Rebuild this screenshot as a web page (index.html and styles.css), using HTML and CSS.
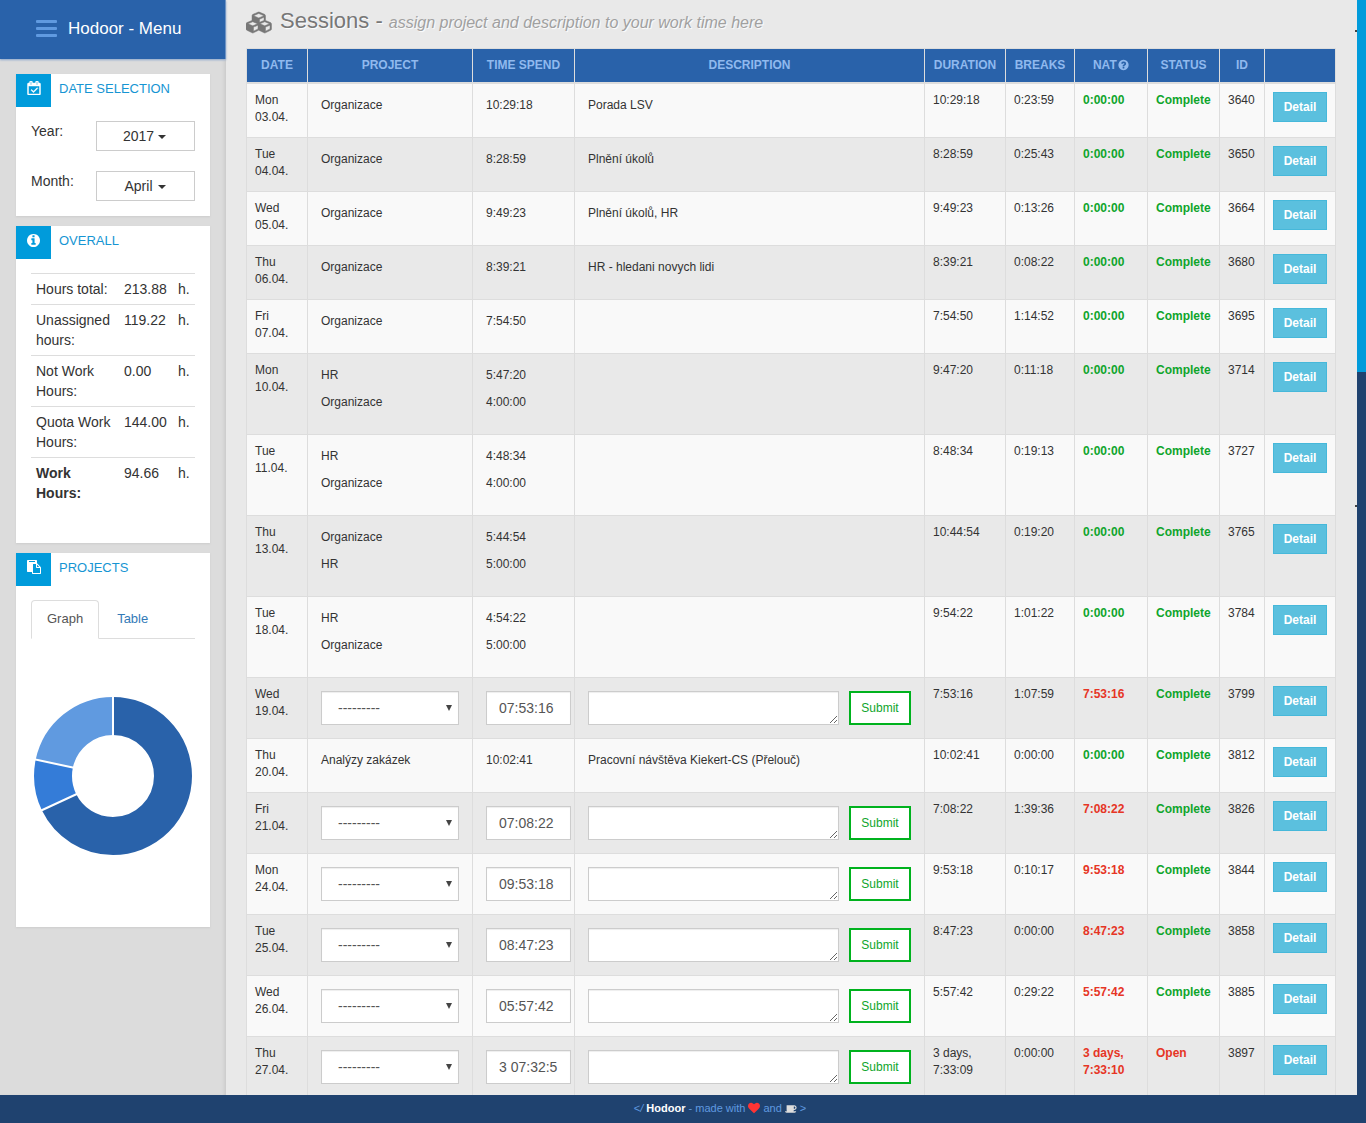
FILE: index.html
```html
<!DOCTYPE html>
<html lang="en">
<head>
<meta charset="utf-8">
<meta name="viewport" content="width=device-width, initial-scale=1">
<title>Hodoor - Sessions</title>
<link rel="stylesheet" href="styles.css">
</head>
<body>
<div class="app">
  <aside class="sidebar">
    <header class="brand">
      <button class="menu-toggle" type="button" aria-label="Toggle menu"><svg width="21" height="17" viewBox="0 0 21 17"><rect width="21" height="3" rx="1"/><rect y="7" width="21" height="3" rx="1"/><rect y="14" width="21" height="3" rx="1"/></svg></button>
      <span>Hodoor - Menu</span>
    </header>
    <div class="cards">
      <section class="card card-date">
        <h2 class="card-title"><span class="badge"><svg width="14" height="14" viewBox="0 0 1664 1792"><path d="M1303 964l-512 512q-10 9-23 9t-23-9l-288-288q-9-10-9-23t9-22l46-46q9-9 22-9t23 9l220 220 444-444q10-9 23-9t22 9l46 46q9 9 9 22t-9 23zm-1175 700h1408v-1024h-1408v1024zm384-1216v-288q0-14-9-23t-23-9h-64q-14 0-23 9t-9 23v288q0 14 9 23t23 9h64q14 0 23-9t9-23zm768 0v-288q0-14-9-23t-23-9h-64q-14 0-23 9t-9 23v288q0 14 9 23t23 9h64q14 0 23-9t9-23zm384-64v1280q0 52-38 90t-90 38h-1408q-52 0-90-38t-38-90v-1280q0-52 38-90t90-38h128v-96q0-66 47-113t113-47h64q66 0 113 47t47 113v96h384v-96q0-66 47-113t113-47h64q66 0 113 47t47 113v96h128q52 0 90 38t38 90z" stroke="currentColor" stroke-width="60"/></svg></span><span>DATE SELECTION</span></h2>
        <div class="card-body pickers">
          <div class="picker"><label for="year">Year:</label><span class="pick"><select id="year"><option>2017</option></select></span></div>
          <div class="picker"><label for="month">Month:</label><span class="pick"><select id="month"><option>April</option></select></span></div>
        </div>
      </section>
      <section class="card card-overall">
        <h2 class="card-title"><span class="badge"><svg width="13" height="13" viewBox="0 128 1536 1536"><path d="M1024 1376v-160q0-14-9-23t-23-9h-96v-512q0-14-9-23t-23-9h-320q-14 0-23 9t-9 23v160q0 14 9 23t23 9h96v320h-96q-14 0-23 9t-9 23v160q0 14 9 23t23 9h448q14 0 23-9t9-23zm-128-896v-160q0-14-9-23t-23-9h-192q-14 0-23 9t-9 23v160q0 14 9 23t23 9h192q14 0 23-9t9-23zm640 416q0 209-103 385.5t-279.5 279.5-385.5 103-385.5-103-279.5-279.5-103-385.5 103-385.5 279.5-279.5 385.5-103 385.5 103 279.5 279.5 103 385.5z"/></svg></span><span>OVERALL</span></h2>
        <div class="card-body">
          <table class="totals">
            <tr><th>Hours total:</th><td>213.88</td><td>h.</td></tr>
            <tr><th>Unassigned hours:</th><td>119.22</td><td>h.</td></tr>
            <tr><th>Not Work Hours:</th><td>0.00</td><td>h.</td></tr>
            <tr><th>Quota Work Hours:</th><td>144.00</td><td>h.</td></tr>
            <tr><th class="strong">Work Hours:</th><td>94.66</td><td>h.</td></tr>
          </table>
        </div>
      </section>
      <section class="card card-projects">
        <h2 class="card-title"><span class="badge"><svg width="14" height="14" viewBox="0 0 1792 1792"><path d="M768 1664h896v-640h-416q-40 0-68-28t-28-68v-416h-384v1152zm256-1440v-64q0-13-9.5-22.5t-22.5-9.5h-704q-13 0-22.5 9.5t-9.5 22.5v64q0 13 9.5 22.5t22.5 9.5h704q13 0 22.5-9.5t9.5-22.5zm256 672h299l-299-299v299zm512 128v672q0 40-28 68t-68 28h-960q-40 0-68-28t-28-68v-160h-544q-40 0-68-28t-28-68v-1344q0-40 28-68t68-28h1088q40 0 68 28t28 68v328q21 13 36 28l408 408q28 28 48 76t20 88z"/></svg></span><span>PROJECTS</span></h2>
        <div class="card-body">
          <nav class="tabs"><a class="tab active" href="#graph">Graph</a><a class="tab" href="#table">Table</a></nav>
          <svg class="donut" viewBox="0 0 160 160" role="img" aria-label="Hours by project">
            <g fill="none" stroke-width="38" transform="rotate(-90 80 80)">
              <circle cx="80" cy="80" r="60" pathLength="360" stroke="#2962aa" stroke-dasharray="244 116"/>
              <circle cx="80" cy="80" r="60" pathLength="360" stroke="#347cd8" stroke-dasharray="38 322" stroke-dashoffset="-244"/>
              <circle cx="80" cy="80" r="60" pathLength="360" stroke="#609ae0" stroke-dasharray="78 282" stroke-dashoffset="-282"/>
            </g>
            <path d="M80 42V0M46 97L5 116M42 72L0 63" stroke="#fff" stroke-width="2" fill="none"/>
          </svg>
        </div>
      </section>
    </div>
  </aside>
  <main class="content">
    <h1><svg width="27" height="23" viewBox="0 0 2304 1792"><path d="M640 1632l384-192v-314l-384 164v342zm-64-454l404-173-404-173-404 173zm1088 454l384-192v-314l-384 164v342zm-64-454l404-173-404-173-404 173zm-448-293l384-165v-266l-384 164v267zm-64-379l441-189-441-189-441 189zm1088 518v416q0 36-19 67t-52 47l-448 224q-25 14-57 14t-57-14l-448-224q-4-2-7-4-2 2-7 4l-448 224q-25 14-57 14t-57-14l-448-224q-33-16-52-47t-19-67v-416q0-38 21.5-70t56.5-48l434-186v-400q0-38 21.5-70t56.5-48l448-192q23-10 50-10t50 10l448 192q35 16 56.5 48t21.5 70v400l434 186q36 16 57 48t21 70z" stroke="currentColor" stroke-width="40"/></svg><span>Sessions - <small>assign project and description to your work time here</small></span></h1>
    <table class="sessions">
      <colgroup><col class="w-date"><col class="w-project"><col class="w-time"><col><col class="w-duration"><col class="w-breaks"><col class="w-nat"><col class="w-status"><col class="w-id"><col class="w-detail"></colgroup>
      <thead><tr><th>DATE</th><th>PROJECT</th><th>TIME SPEND</th><th>DESCRIPTION</th><th>DURATION</th><th>BREAKS</th><th>NAT <svg width="11" height="12" viewBox="0 0 1536 1792"><path d="M896 1376v-192q0-14-9-23t-23-9h-192q-14 0-23 9t-9 23v192q0 14 9 23t23 9h192q14 0 23-9t9-23zm256-672q0-88-55.5-163t-138.5-116-170-41q-243 0-371 213-15 24 8 42l132 100q7 6 19 6 16 0 25-12 53-68 86-92 34-24 86-24 48 0 85.5 26t37.5 59q0 38-20 61t-68 45q-63 28-115.5 86.5t-52.5 125.5v36q0 14 9 23t23 9h192q14 0 23-9t9-23q0-19 21.5-49.5t54.5-49.5q32-18 49-28.5t46-35 44.5-48 28-60.5 12.5-81zm384 192q0 209-103 385.5t-279.5 279.5-385.5 103-385.5-103-279.5-279.5-103-385.5 103-385.5 279.5-279.5 385.5-103 385.5 103 279.5 279.5 103 385.5z"/></svg></th><th>STATUS</th><th>ID</th><th></th></tr></thead>
      <tbody>
        <tr><td>Mon<br>03.04.</td><td class="entries"><p>Organizace</p></td><td class="entries"><p>10:29:18</p></td><td class="entries"><p>Porada LSV</p></td><td>10:29:18</td><td>0:23:59</td><td class="ok">0:00:00</td><td class="ok">Complete</td><td>3640</td><td><a class="detail" href="#3640">Detail</a></td></tr>
        <tr><td>Tue<br>04.04.</td><td class="entries"><p>Organizace</p></td><td class="entries"><p>8:28:59</p></td><td class="entries"><p>Plnění úkolů</p></td><td>8:28:59</td><td>0:25:43</td><td class="ok">0:00:00</td><td class="ok">Complete</td><td>3650</td><td><a class="detail" href="#3650">Detail</a></td></tr>
        <tr><td>Wed<br>05.04.</td><td class="entries"><p>Organizace</p></td><td class="entries"><p>9:49:23</p></td><td class="entries"><p>Plnění úkolů, HR</p></td><td>9:49:23</td><td>0:13:26</td><td class="ok">0:00:00</td><td class="ok">Complete</td><td>3664</td><td><a class="detail" href="#3664">Detail</a></td></tr>
        <tr><td>Thu<br>06.04.</td><td class="entries"><p>Organizace</p></td><td class="entries"><p>8:39:21</p></td><td class="entries"><p>HR - hledani novych lidi</p></td><td>8:39:21</td><td>0:08:22</td><td class="ok">0:00:00</td><td class="ok">Complete</td><td>3680</td><td><a class="detail" href="#3680">Detail</a></td></tr>
        <tr><td>Fri<br>07.04.</td><td class="entries"><p>Organizace</p></td><td class="entries"><p>7:54:50</p></td><td></td><td>7:54:50</td><td>1:14:52</td><td class="ok">0:00:00</td><td class="ok">Complete</td><td>3695</td><td><a class="detail" href="#3695">Detail</a></td></tr>
        <tr><td>Mon<br>10.04.</td><td class="entries"><p>HR</p><p>Organizace</p></td><td class="entries"><p>5:47:20</p><p>4:00:00</p></td><td></td><td>9:47:20</td><td>0:11:18</td><td class="ok">0:00:00</td><td class="ok">Complete</td><td>3714</td><td><a class="detail" href="#3714">Detail</a></td></tr>
        <tr><td>Tue<br>11.04.</td><td class="entries"><p>HR</p><p>Organizace</p></td><td class="entries"><p>4:48:34</p><p>4:00:00</p></td><td></td><td>8:48:34</td><td>0:19:13</td><td class="ok">0:00:00</td><td class="ok">Complete</td><td>3727</td><td><a class="detail" href="#3727">Detail</a></td></tr>
        <tr><td>Thu<br>13.04.</td><td class="entries"><p>Organizace</p><p>HR</p></td><td class="entries"><p>5:44:54</p><p>5:00:00</p></td><td></td><td>10:44:54</td><td>0:19:20</td><td class="ok">0:00:00</td><td class="ok">Complete</td><td>3765</td><td><a class="detail" href="#3765">Detail</a></td></tr>
        <tr><td>Tue<br>18.04.</td><td class="entries"><p>HR</p><p>Organizace</p></td><td class="entries"><p>4:54:22</p><p>5:00:00</p></td><td></td><td>9:54:22</td><td>1:01:22</td><td class="ok">0:00:00</td><td class="ok">Complete</td><td>3784</td><td><a class="detail" href="#3784">Detail</a></td></tr>
        <tr><td>Wed<br>19.04.</td><td class="entries"><span class="choose"><select aria-label="Project"><option>---------</option></select></span></td><td class="entries"><input class="time" type="text" aria-label="Time spend" value="07:53:16"></td><td class="entries"><div class="describe"><textarea rows="1" aria-label="Description"></textarea><button class="submit" type="submit">Submit</button></div></td><td>7:53:16</td><td>1:07:59</td><td class="bad">7:53:16</td><td class="ok">Complete</td><td>3799</td><td><a class="detail" href="#3799">Detail</a></td></tr>
        <tr><td>Thu<br>20.04.</td><td class="entries"><p>Analýzy zakázek</p></td><td class="entries"><p>10:02:41</p></td><td class="entries"><p>Pracovní návštěva Kiekert-CS (Přelouč)</p></td><td>10:02:41</td><td>0:00:00</td><td class="ok">0:00:00</td><td class="ok">Complete</td><td>3812</td><td><a class="detail" href="#3812">Detail</a></td></tr>
        <tr><td>Fri<br>21.04.</td><td class="entries"><span class="choose"><select aria-label="Project"><option>---------</option></select></span></td><td class="entries"><input class="time" type="text" aria-label="Time spend" value="07:08:22"></td><td class="entries"><div class="describe"><textarea rows="1" aria-label="Description"></textarea><button class="submit" type="submit">Submit</button></div></td><td>7:08:22</td><td>1:39:36</td><td class="bad">7:08:22</td><td class="ok">Complete</td><td>3826</td><td><a class="detail" href="#3826">Detail</a></td></tr>
        <tr><td>Mon<br>24.04.</td><td class="entries"><span class="choose"><select aria-label="Project"><option>---------</option></select></span></td><td class="entries"><input class="time" type="text" aria-label="Time spend" value="09:53:18"></td><td class="entries"><div class="describe"><textarea rows="1" aria-label="Description"></textarea><button class="submit" type="submit">Submit</button></div></td><td>9:53:18</td><td>0:10:17</td><td class="bad">9:53:18</td><td class="ok">Complete</td><td>3844</td><td><a class="detail" href="#3844">Detail</a></td></tr>
        <tr><td>Tue<br>25.04.</td><td class="entries"><span class="choose"><select aria-label="Project"><option>---------</option></select></span></td><td class="entries"><input class="time" type="text" aria-label="Time spend" value="08:47:23"></td><td class="entries"><div class="describe"><textarea rows="1" aria-label="Description"></textarea><button class="submit" type="submit">Submit</button></div></td><td>8:47:23</td><td>0:00:00</td><td class="bad">8:47:23</td><td class="ok">Complete</td><td>3858</td><td><a class="detail" href="#3858">Detail</a></td></tr>
        <tr><td>Wed<br>26.04.</td><td class="entries"><span class="choose"><select aria-label="Project"><option>---------</option></select></span></td><td class="entries"><input class="time" type="text" aria-label="Time spend" value="05:57:42"></td><td class="entries"><div class="describe"><textarea rows="1" aria-label="Description"></textarea><button class="submit" type="submit">Submit</button></div></td><td>5:57:42</td><td>0:29:22</td><td class="bad">5:57:42</td><td class="ok">Complete</td><td>3885</td><td><a class="detail" href="#3885">Detail</a></td></tr>
        <tr><td>Thu<br>27.04.</td><td class="entries"><span class="choose"><select aria-label="Project"><option>---------</option></select></span></td><td class="entries"><input class="time" type="text" aria-label="Time spend" value="3 07:32:5"></td><td class="entries"><div class="describe"><textarea rows="1" aria-label="Description"></textarea><button class="submit" type="submit">Submit</button></div></td><td>3 days, 7:33:09</td><td>0:00:00</td><td class="bad">3 days, 7:33:10</td><td class="bad">Open</td><td>3897</td><td><a class="detail" href="#3897">Detail</a></td></tr>
      </tbody>
    </table>
    <i class="tick tick-top"></i><i class="tick tick-mid"></i>
  </main>
  <div class="scroll-track"><div class="scroll-thumb"></div></div>
</div>
<footer class="footer">
  <span>&lt;<i>/</i> <b>Hodoor</b> - made with</span>
  <svg class="heart" width="12" height="12" viewBox="0 0 1792 1792" role="img" aria-label="love"><path d="M896 1664q-26 0-44-18l-624-602q-10-8-27.5-26t-55.5-65.5-68-97.5-53.5-121-23.5-138q0-220 127-344t351-124q62 0 126.5 21.5t120 58 95.5 68.5 76 68q36-36 76-68t95.5-68.5 120-58 126.5-21.5q224 0 351 124t127 344q0 221-229 450l-623 600q-18 18-44 18z"/></svg>
  <span>and</span>
  <svg class="coffee" width="12" height="12" viewBox="0 0 1920 1792" role="img" aria-label="coffee"><path d="M1664 832q0-80-56-136t-136-56h-64v384h64q80 0 136-56t56-136zm-1664 576h1792q0 106-75 181t-181 75h-1280q-106 0-181-75t-75-181zm1856-576q0 159-112.5 271.5t-271.5 112.5h-64v32q0 92-66 158t-158 66h-704q-92 0-158-66t-66-158v-736q0-26 19-45t45-19h1152q159 0 271.5 112.5t112.5 271.5z"/></svg>
  <span>&gt;</span>
</footer>
</body>
</html>
```
FILE: styles.css
```css
* { box-sizing: border-box; }

body {
  margin: 0;
  height: 100vh;
  display: flex;
  flex-direction: column;
  overflow: hidden;
  background: #e9e9e9;
  color: #333;
  font: 14px/20px "Liberation Sans", Arial, sans-serif;
}

svg { fill: currentColor; }
select, input, textarea, button { font: inherit; color: inherit; border-radius: 0; margin: 0; }

.app { display: flex; flex: 1; min-height: 0; }

/* Sidebar */
.sidebar {
  flex: 0 0 226px;
  background: #dcdcdc;
  box-shadow: inset -3px 0 3px -1px #ccc;
}
.brand {
  display: flex;
  align-items: center;
  gap: 11px;
  height: 59px;
  padding: 0 36px 2px;
  background: #2962aa;
  border-right: 1px solid #6f94c4;
  box-shadow: 0 1px 2px #8aa6cc;
  color: #fff;
  font-size: 17px;
}
.menu-toggle {
  display: flex;
  padding: 0;
  border: 0;
  background: none;
  color: #609ae0;
}
.cards { display: flex; flex-direction: column; gap: 10px; padding: 15px 16px; }
.card { background: #fff; box-shadow: 0 1px 2px #ccc; }
.card-date { min-height: 142px; }
.card-overall { min-height: 317px; }
.card-projects { min-height: 374px; }
.card-title {
  display: flex;
  gap: 8px;
  margin: 0;
  color: #1695d3;
  font-size: 13px;
  font-weight: normal;
  line-height: 30px;
}
.badge {
  display: flex;
  align-items: center;
  justify-content: center;
  width: 35px;
  height: 33px;
  padding-bottom: 5px;
  background: #009bdb;
  color: #fff;
}
.card-body { padding: 14px 15px; }
.pickers { display: grid; gap: 20px; }
.picker { display: flex; justify-content: space-between; }
.pick, .choose { position: relative; display: block; }
.pick { width: 99px; }
.pick select, .choose select {
  display: block;
  width: 100%;
  appearance: none;
  border: 1px solid #ccc;
  background: #fff;
}
.pick select {
  height: 30px;
  padding: 0 14px 0 0;
  text-align: center;
  text-align-last: center;
}
.pick::after, .choose::after {
  content: "";
  position: absolute;
  border: 4px solid transparent;
  border-bottom: 0;
  pointer-events: none;
}
.pick::after { top: 14px; right: 29px; border-top-color: #333; }

.totals { width: 100%; border-collapse: collapse; table-layout: fixed; }
.totals th, .totals td {
  padding: 5px;
  border-top: 1px solid #ddd;
  text-align: left;
  vertical-align: top;
  font-weight: normal;
}
.totals th { width: 88px; }
.totals td:last-child { width: 22px; }
.totals .strong { font-weight: bold; }

.tabs { display: flex; border-bottom: 1px solid #ddd; font-size: 13px; }
.tab {
  padding: 8px 15px 9px;
  margin-right: 2px;
  margin-bottom: -1px;
  border: 1px solid transparent;
  border-radius: 4px 4px 0 0;
  color: #337ab7;
  text-decoration: none;
}
.tab.active { border-color: #ddd #ddd #fff; background: #fff; color: #555; }
.donut { display: block; width: 160px; margin: 57px auto 0 2px; }

/* Session list */
.content {
  position: relative;
  flex: 1;
  min-width: 0;
  overflow: hidden;
  padding: 9px 21px 0 20px;
}
h1 {
  display: flex;
  align-items: center;
  gap: 7px;
  height: 26px;
  margin: 0 0 13px;
  color: #777;
  font-size: 22px;
  font-weight: normal;
  line-height: 26px;
  text-shadow: 1px 1px 1px #fff;
}
h1 small { color: #a0a0a0; font-size: 16px; font-style: italic; }

.sessions {
  width: 100%;
  border-collapse: collapse;
  table-layout: fixed;
  font-size: 12px;
  line-height: 17px;
}
.w-date { width: 61px; }
.w-project { width: 165px; }
.w-time { width: 102px; }
.w-duration { width: 81px; }
.w-breaks { width: 69px; }
.w-nat { width: 73px; }
.w-status { width: 72px; }
.w-id { width: 45px; }
.w-detail { width: 71px; }
.sessions th, .sessions td { border: 1px solid #ddd; }
.sessions th {
  height: 34px;
  padding: 0;
  border-bottom-width: 2px;
  background: #2962aa;
  color: #90b9ee;
  white-space: nowrap;
}
.sessions th svg { margin-left: -2px; vertical-align: -2px; }
.sessions td { padding: 8px; vertical-align: top; }
.sessions tbody tr:nth-child(odd) { background: #f9f9f9; }
.sessions td.entries { padding: 13px; }
.sessions td.entries:nth-child(3) { padding-right: 3px; }
.entries p { margin: 0 0 10px; }
.sessions .ok { color: #0fa52c; font-weight: bold; }
.sessions .bad { color: #e63525; font-weight: bold; }

.choose select, .time, .describe textarea {
  height: 34px;
  border: 1px solid #ccc;
  background: #fff;
  box-shadow: inset 0 1px 1px #eee;
  color: #555;
  font-size: 14px;
}
.choose select { padding: 2px 16px 0; }
.choose::after { top: 14px; right: 7px; border-width: 6px 3px 0; border-top-color: #444; }
.time { display: block; width: 100%; padding: 0 12px; }
.describe { display: flex; gap: 10px; }
.describe textarea { flex: 1; min-width: 0; padding: 6px 12px; resize: vertical; }
.submit {
  width: 62px;
  height: 34px;
  padding: 1px 0 0;
  border: 2px solid #00b21e;
  background: #fff;
  color: #0fa52c;
}
.detail {
  display: block;
  padding: 6px 0 5px;
  border: 1px solid #46b8da;
  background: #5bc0de;
  color: #fff;
  font-weight: bold;
  text-align: center;
  text-decoration: none;
}

/* Edge marks and scroll track */
.tick {
  position: absolute;
  right: 0;
  width: 2px;
  height: 2px;
  background: #444;
}
.tick-top { top: 30px; }
.tick-mid { top: 505px; }
.scroll-track { flex: 0 0 9px; background: #1f426f; }
.scroll-thumb { height: 34%; background: #009bdb; }

.footer {
  display: flex;
  align-items: center;
  justify-content: center;
  gap: 3px;
  flex: 0 0 28px;
  padding: 0 0 2px 74px;
  background: #1f426f;
  color: #609ae0;
  font-size: 11px;
}
.footer b { color: #fff; }
.heart { color: #ff3434; }
.coffee { color: #ddd; }
```
